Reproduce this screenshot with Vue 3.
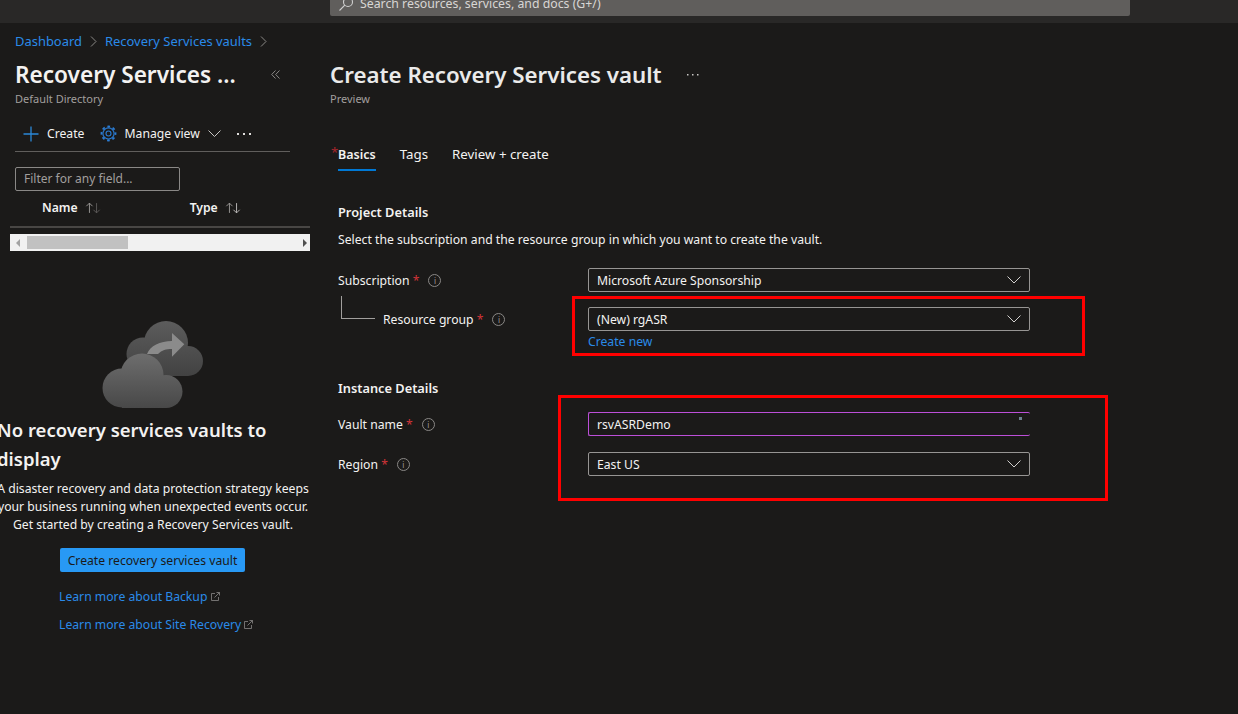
<script setup>
const crumbs = ['Dashboard', 'Recovery Services vaults']
const tabs = ['Tags', 'Review + create']
const paragraph = [
  'A disaster recovery and data protection strategy keeps',
  'your business running when unexpected events occur.',
  'Get started by creating a Recovery Services vault.'
]
</script>

<template>
  <div class="page">
    <header class="topbar">
      <div class="search">
        <svg class="search-icon" width="16" height="16" viewBox="0 0 16 16" fill="none" stroke="#d0d0d0" stroke-width="1.1">
          <circle cx="10" cy="6" r="4.5" />
          <path d="M6.8 9.2 1.5 14.5" />
        </svg>
        <span>Search resources, services, and docs (G+/)</span>
      </div>
    </header>

    <div class="content">
      <aside class="side">
        <nav class="crumbs">
          <template v-for="c in crumbs" :key="c">
            <a class="link">{{ c }}</a>
            <svg width="7" height="11" viewBox="0 0 7 11" fill="none" stroke="#8a8886"><path d="M1 .5 6 5.5 1 10.5" /></svg>
          </template>
        </nav>

        <div class="side-head">
          <h1>Recovery Services ...</h1>
          <svg class="collapse" width="9" height="9" viewBox="0 0 9 9" fill="none" stroke="#8a8886"><path d="M4.5.5.7 4.5l3.8 4M8.5.5 4.7 4.5l3.8 4" /></svg>
        </div>
        <p class="sub">Default Directory</p>

        <div class="toolbar">
          <svg width="16" height="16" viewBox="0 0 16 16" stroke="#2b88d8" stroke-width="1.3"><path d="M8 .5v15M.5 8h15" /></svg>
          <span class="tool-create">Create</span>
          <svg class="gear" width="17" height="17" viewBox="0 0 17 17" fill="none" stroke="#2b7cd3">
            <circle cx="8.5" cy="8.5" r="2.5" stroke-width="1.1" />
            <circle cx="8.5" cy="8.5" r="5.600" stroke-width="1.1" />
            <circle cx="8.5" cy="8.5" r="7" stroke-width="1.800" stroke-dasharray="2.700 2.800" stroke-dashoffset="1.350" />
          </svg>
          <span class="tool-manage">Manage view</span>
          <svg class="chev-small" width="13" height="7" viewBox="0 0 13 7" fill="none" stroke="#c8c6c4"><path d="M.5.5 6.500 6.500 12.500.5" /></svg>
          <svg class="tool-more" width="15" height="3" viewBox="0 0 15 3" fill="#e1dfdd"><rect x="0" y="1" width="2" height="2" /><rect x="6" y="1" width="2" height="2" /><rect x="12" y="1" width="2" height="2" /></svg>
        </div>

        <div class="filter">Filter for any field...</div>

        <div class="thead">
          <span class="th-name">Name</span>
          <svg class="sort" width="16" height="12" viewBox="0 0 18 13" fill="none"><path d="M5 12V1M1.500 4.500 5 1l3.500 3.500" stroke="#a19f9d" /><path d="M13 1v11M9.500 8.500 13 12l3.500-3.500" stroke="#605e5c" /></svg>
          <span class="th-type">Type</span>
          <svg class="sort" width="16" height="12" viewBox="0 0 18 13" fill="none"><path d="M5 12V1M1.500 4.500 5 1l3.500 3.500" stroke="#a19f9d" /><path d="M13 1v11M9.500 8.500 13 12l3.500-3.500" stroke="#c8c6c4" /></svg>
        </div>

        <div class="hscroll">
          <i class="arrow-left"></i>
          <div class="thumb"></div>
          <i class="arrow-right"></i>
        </div>

        <svg class="cloud" width="106" height="92" viewBox="100 318 106 92">
          <defs>
            <linearGradient id="backGrad" gradientUnits="userSpaceOnUse" x1="0" y1="321" x2="0" y2="376">
              <stop offset="0" stop-color="#5c5c5c" />
              <stop offset="1" stop-color="#424242" />
            </linearGradient>
            <linearGradient id="frontGrad" gradientUnits="userSpaceOnUse" x1="0" y1="353" x2="0" y2="408">
              <stop offset="0" stop-color="#6e6e6e" />
              <stop offset="1" stop-color="#484848" />
            </linearGradient>
          </defs>
          <g fill="url(#backGrad)">
            <circle cx="166" cy="343" r="22" />
            <circle cx="143" cy="354" r="16.500" />
            <circle cx="188" cy="361" r="15" />
            <rect x="143" y="350" width="45" height="26" />
          </g>
          <path fill="#8b8b8b" d="M147 354c3-8 13-13 25-13v-8l12.300 11.300-12.300 12.400V349c-6 0-10 1-14 5z" />
          <g fill="url(#frontGrad)">
            <circle cx="142" cy="375" r="21.500" />
            <circle cx="122" cy="388" r="19.500" />
            <circle cx="166" cy="391.500" r="16.500" />
            <rect x="122" y="380" width="44" height="28" />
          </g>
        </svg>

        <h2 class="empty-title">No recovery services vaults to display</h2>
        <p class="empty-text">
          <span v-for="line in paragraph" :key="line">{{ line }}</span>
        </p>
        <button class="cta">Create recovery services vault</button>
        <a class="link learn">Learn more about Backup
          <svg width="9" height="9" viewBox="0 0 9 9" fill="none" stroke="#8a8886" stroke-width=".8"><path d="M4 1.500H.5v7h7V5M3.500 5.500 8.500.5M5.500.5h3v3" /></svg>
        </a>
        <a class="link learn">Learn more about Site Recovery
          <svg width="9" height="9" viewBox="0 0 9 9" fill="none" stroke="#8a8886" stroke-width=".8"><path d="M4 1.500H.5v7h7V5M3.500 5.500 8.500.5M5.500.5h3v3" /></svg>
        </a>
      </aside>

      <main class="main">
        <div class="main-head">
          <h1>Create Recovery Services vault</h1>
          <svg class="main-more" width="12" height="2" viewBox="0 0 12 2" fill="#c8c6c4"><rect x="0" y="0" width="1.500" height="1.500" /><rect x="5" y="0" width="1.500" height="1.500" /><rect x="10" y="0" width="1.500" height="1.500" /></svg>
        </div>
        <p class="sub">Preview</p>

        <div class="tabs">
          <span class="req-tab">*</span>
          <span class="tab active">Basics</span>
          <span v-for="t in tabs" :key="t" class="tab">{{ t }}</span>
        </div>

        <section class="form">
          <h3 class="project">Project Details</h3>
          <p class="intro">Select the subscription and the resource group in which you want to create the vault.</p>

          <div class="row row-sub">
            <label>Subscription <b>*</b><i class="info">i</i></label>
            <div class="select">Microsoft Azure Sponsorship
              <svg width="14" height="8" viewBox="0 0 14 8" fill="none" stroke="#d2d0ce"><path d="M.5.500 7 7 13.500.500" /></svg>
            </div>
          </div>
          <div class="row row-rg">
            <div class="tree"></div>
            <label>Resource group <b>*</b><i class="info">i</i></label>
            <div class="select">(New) rgASR
              <svg width="14" height="8" viewBox="0 0 14 8" fill="none" stroke="#d2d0ce"><path d="M.5.500 7 7 13.500.500" /></svg>
            </div>
          </div>
          <a class="link create-new">Create new</a>

          <h3 class="instance">Instance Details</h3>
          <div class="row row-vault">
            <label>Vault name <b>*</b><i class="info">i</i></label>
            <div class="select vault">rsvASRDemo<i class="dot"></i></div>
          </div>
          <div class="row row-region">
            <label>Region <b>*</b><i class="info">i</i></label>
            <div class="select">East US
              <svg width="14" height="8" viewBox="0 0 14 8" fill="none" stroke="#d2d0ce"><path d="M.5.500 7 7 13.500.500" /></svg>
            </div>
          </div>
        </section>

        <div class="mark mark-rg"></div>
        <div class="mark mark-instance"></div>
      </main>
    </div>
  </div>
</template>

<style>
body {
  background: #1b1a19;
}
</style>

<style scoped>
.page {
  width: 1238px;
  height: 714px;
  overflow: hidden;
  background: #1b1a19;
  color: #f3f2f1;
  font-family: "Noto Sans", "Open Sans", sans-serif;
  font-size: 12.200px;
}
.topbar {
  height: 23px;
  background: #292827;
  padding-left: 330px;
  overflow: hidden;
}
.search {
  width: 800px;
  height: 28px;
  margin-top: -12px;
  background: #605e5c;
  border-radius: 2px;
  display: flex;
  align-items: center;
  gap: 6px;
  padding: 3px 0 0 8px;
  box-sizing: border-box;
  color: #d8d6d4;
  font-size: 12.300px;
}
.search-icon {
  width: 16px;
}
.content {
  display: flex;
  height: 691px;
}
.link {
  color: #2a8ae8;
}
.side {
  width: 310px;
  flex: none;
  background: #1b1a19;
  position: relative;
  overflow: hidden;
}
.crumbs {
  height: 36px;
  padding-left: 15px;
  display: flex;
  align-items: center;
  gap: 8px;
}
.crumbs .link {
  font-size: 12.950px;
}
.side-head {
  display: flex;
  align-items: center;
  padding-left: 15px;
  height: 31px;
}
h1 {
  margin: 0 0 1px;
  font-size: 22.300px;
  font-weight: 600;
  color: #f3f2f1;
  white-space: nowrap;
}
.side h1 {
  font-size: 22.600px;
}
.main h1 {
  color: #eaeaea;
}
.collapse {
  margin-left: 35px;
}
.sub {
  margin: 0;
  padding-left: 15px;
  height: 18px;
  line-height: 18px;
  font-size: 11px;
  color: #a19f9d;
}
.toolbar {
  margin: 8px 20px 0 15px;
  height: 36px;
  box-sizing: border-box;
  border-bottom: 1px solid #605e5c;
  padding: 0 0 0 8px;
  display: flex;
  align-items: center;
}
.tool-create {
  margin-left: 8px;
}
.gear {
  margin-left: 16px;
}
.tool-manage {
  margin-left: 7px;
}
.chev-small {
  margin-left: 8px;
}
.tool-more {
  margin-left: 16px;
}
.filter {
  margin: 15px 0 0 15px;
  width: 165px;
  height: 24px;
  box-sizing: border-box;
  border: 1px solid #8a8886;
  border-radius: 2px;
  padding-left: 8px;
  line-height: 22px;
  font-size: 12px;
  color: #a19f9d;
}
.thead {
  margin-left: 10px;
  width: 300px;
  height: 37px;
  box-sizing: border-box;
  border-bottom: 2px solid #484644;
  padding-bottom: 2px;
  display: flex;
  align-items: center;
  font-weight: 600;
}
.th-name {
  margin-left: 32px;
}
.th-type {
  margin-left: 89px;
}
.sort {
  margin-left: 7px;
}
.hscroll {
  margin: 6px 0 0 10px;
  width: 300px;
  height: 17px;
  background: #f1f1f1;
  display: flex;
  align-items: center;
}
.arrow-left {
  margin-left: 6px;
  border: 4px solid transparent;
  border-left: 0;
  border-right-color: #a3a3a3;
}
.thumb {
  margin-left: 7px;
  width: 101px;
  height: 13px;
  background: #c1c1c1;
}
.arrow-right {
  margin-left: auto;
  margin-right: 3px;
  border: 4px solid transparent;
  border-right: 0;
  border-left-color: #505050;
}
.cloud {
  display: block;
  margin: 67px 0 0 100px;
}
.empty-title {
  margin: 5px 0 0 -3px;
  width: 300px;
  font-size: 18.500px;
  font-weight: 600;
  line-height: 29px;
}
.empty-text {
  margin: 7px 0 0 -7px;
  width: 320px;
  text-align: center;
  line-height: 18px;
  white-space: nowrap;
}
.empty-text span {
  display: block;
}
.cta {
  display: block;
  margin: 14px 0 0 60px;
  width: 185px;
  height: 24px;
  padding: 0;
  border: 0;
  border-radius: 2px;
  background: #2899f5;
  color: #1b1a19;
  font-family: inherit;
  font-size: 12.200px;
}
.learn {
  display: block;
  margin: 18px 0 0 59px;
  height: 13px;
  line-height: 13px;
}
.learn + .learn {
  margin-top: 15px;
}
.main {
  flex: 1;
  position: relative;
  background: #1b1a19;
  padding-top: 36px;
}
.main-head {
  display: flex;
  align-items: center;
  height: 31px;
  padding-left: 20px;
}
.main-more {
  margin-left: 25px;
}
.main .sub {
  padding-left: 20px;
}
.tabs {
  margin: 35px 0 0 28px;
  height: 28px;
  position: relative;
  display: flex;
  gap: 24px;
  font-size: 13.300px;
}
.req-tab {
  position: absolute;
  left: -7px;
  top: 0;
  color: #a4262c;
}
.tab {
  height: 28px;
  line-height: 22px;
  box-sizing: border-box;
}
.tab.active {
  font-size: 12.500px;
  font-weight: 600;
  line-height: 23px;
  border-bottom: 2px solid #0078d4;
}
.form {
  margin-left: 28px;
  width: 692px;
}
h3 {
  margin: 0;
  font-size: 12.800px;
  font-weight: 600;
  line-height: 18px;
}
.project {
  margin-top: 32px;
}
.intro {
  margin: 10px 0 0;
  line-height: 18px;
}
.row {
  position: relative;
  display: flex;
  align-items: center;
  height: 24px;
}
.row label {
  width: 250px;
  flex: none;
  box-sizing: border-box;
  display: flex;
  align-items: center;
  white-space: pre;
}
.row b {
  color: #d13438;
  font-weight: 400;
}
.info {
  width: 11px;
  height: 11px;
  margin-left: 9px;
  border: 1px solid #8a8886;
  border-radius: 50%;
  font-size: 8px;
  font-style: normal;
  line-height: 11px;
  text-align: center;
  color: #a19f9d;
}
.row-sub {
  margin-top: 19px;
}
.row-rg {
  margin-top: 15px;
}
.row-rg label {
  padding-left: 45px;
}
.tree {
  position: absolute;
  left: 3px;
  top: -11px;
  width: 33px;
  height: 22px;
  border-left: 1px solid #a19f9d;
  border-bottom: 1px solid #a19f9d;
}
.select {
  width: 442px;
  height: 24px;
  box-sizing: border-box;
  border: 1px solid #979593;
  border-radius: 2px;
  padding: 0 8px;
  position: relative;
  line-height: 23px;
}
.select svg {
  position: absolute;
  right: 8px;
  top: 7px;
}
.vault {
  border-color: #bd4fd8;
  border-right: 0;
}
.dot {
  position: absolute;
  right: 8px;
  top: 4px;
  width: 3px;
  height: 3px;
  background: #6d8090;
}
.create-new {
  display: block;
  margin-left: 250px;
  height: 20px;
  line-height: 21px;
}
.instance {
  margin-top: 28px;
}
.row-vault {
  margin-top: 15px;
}
.row-region {
  margin-top: 16px;
}
.mark {
  position: absolute;
  box-sizing: border-box;
  border: 3px solid #f00;
  pointer-events: none;
}
.mark-rg {
  left: 262px;
  top: 273px;
  width: 513px;
  height: 60px;
}
.mark-instance {
  left: 248px;
  top: 372px;
  width: 550px;
  height: 106px;
}
</style>
